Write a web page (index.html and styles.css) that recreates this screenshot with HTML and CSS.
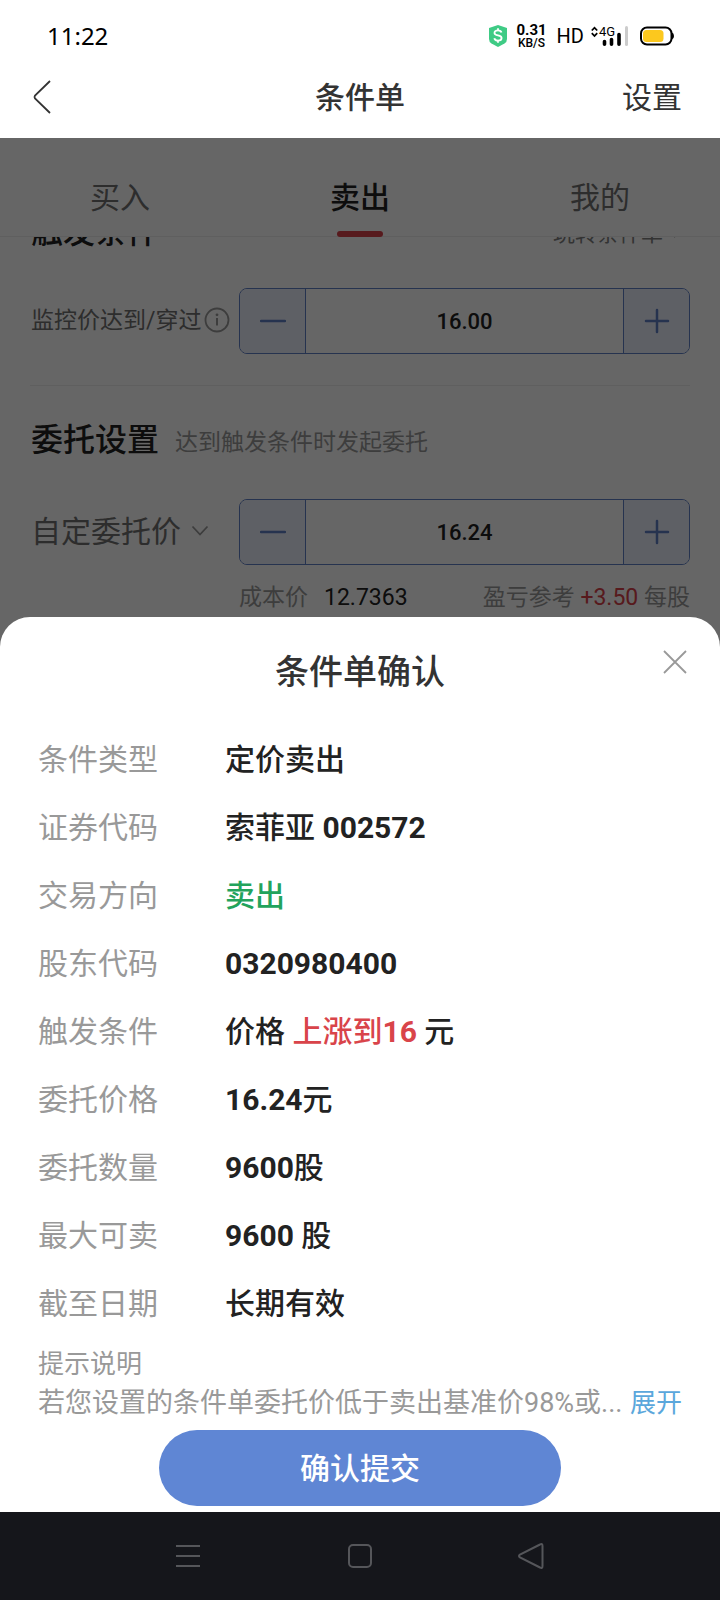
FILE: index.html
```html
<!DOCTYPE html>
<html lang="zh-CN">
<head>
<meta charset="utf-8">
<meta name="viewport" content="width=device-width, initial-scale=1">
<title>条件单</title>
<link rel="stylesheet" href="styles.css">
</head>
<body>
<div class="app">
  <div class="status">
    <span class="status-time">11:22</span>
    <div class="status-icons">
      <svg class="shield" width="20" height="24" viewBox="0 0 20 24" aria-hidden="true">
        <path d="M10 1L19 4V15Q19 18 16.500 19.500L10 23L3.500 19.500Q1 18 1 15V4Z" fill="#3fcb85"/>
        <path d="M13.500 8.500C13 6.800 11.700 6.300 10 6.300C8 6.300 6.500 7.200 6.500 8.900C6.500 12.400 13.600 10.400 13.600 14C13.600 15.700 12 16.600 10 16.600C8 16.600 6.700 15.900 6.300 14.200M10 4.300V6.300M10 16.600V18.800" fill="none" stroke="#fff" stroke-width="1.800"/>
      </svg>
      <span class="speed"><span class="speed-value">0.31</span><span class="speed-unit">KB/S</span></span>
      <span class="hd">HD</span>
      <svg class="signal" width="38" height="24" viewBox="0 0 38 24" role="img" aria-label="4G">
        <path d="M0.800 6.500L3.500 3.700L6.200 6.500M0.800 9.200L3.500 12L6.200 9.200" fill="none" stroke="#000" stroke-width="1.800"/>
        <text x="8" y="12" class="signal-text">4G</text>
        <path d="M13.500 17.500V20.300M20.500 15.500V20.300M28 10.500V20.300" stroke="#000" stroke-width="3.600" stroke-linecap="round"/>
        <path d="M35.500 3.500V20.500" stroke="#ccc" stroke-width="3" stroke-linecap="round"/>
      </svg>
      <svg class="battery" width="35" height="20" viewBox="0 0 35 20" aria-hidden="true">
        <rect x="1" y="1.500" width="30.500" height="17" rx="6" fill="#fff" stroke="#000" stroke-width="2"/>
        <path d="M32 6.500Q34 7 34 10T32 13.500Z" fill="#000"/>
        <rect x="3" y="4" width="20.500" height="12" rx="3.500" fill="#fcc81e"/>
      </svg>
    </div>
  </div>

  <header class="header">
    <button class="back" type="button" aria-label="返回">
      <svg width="20" height="36" viewBox="0 0 20 36" aria-hidden="true"><path d="M18 1L3 15.500Q2 17 3 18.500L18 33" fill="none" stroke="#333" stroke-width="1.800"/></svg>
    </button>
    <h1 class="header-title">条件单</h1>
    <button class="settings" type="button">设置</button>
  </header>

  <main class="stage">
    <div class="page">
      <nav class="tabs">
        <button class="tab" type="button">买入</button>
        <button class="tab tab-active" type="button">卖出</button>
        <button class="tab" type="button">我的</button>
      </nav>
      <div class="scroller">
        <form class="form">
          <section class="group">
            <div class="group-head">
              <h2 class="group-title">触发条件</h2>
              <a class="guide" href="#guide">玩转条件单
                <svg width="8" height="14" viewBox="0 0 8 14" aria-hidden="true"><path d="M1 1L7 7L1 13" fill="none" stroke="#999" stroke-width="1.800"/></svg>
              </a>
            </div>
            <div class="field">
              <div class="field-label">
                <label class="label-small" for="watch">监控价达到/穿过</label>
                <svg width="26" height="26" viewBox="0 0 26 26" aria-hidden="true"><circle cx="13" cy="13" r="11.500" fill="none" stroke="#999" stroke-width="1.800"/><circle cx="13" cy="7.800" r="1.400" fill="#999"/><path d="M13 11V18.500" stroke="#999" stroke-width="2"/></svg>
              </div>
              <div class="stepper">
                <button class="step" type="button" aria-label="减少"><svg width="26" height="26" viewBox="0 0 26 26" aria-hidden="true"><path d="M1 13H25" class="step-line"/></svg></button>
                <input class="step-value" id="watch" type="text" value="16.00">
                <button class="step" type="button" aria-label="增加"><svg width="26" height="26" viewBox="0 0 26 26" aria-hidden="true"><path d="M2 13H24M13 2V24" class="step-line"/></svg></button>
              </div>
            </div>
          </section>
          <section class="group group-order">
            <div class="group-head">
              <h2 class="group-title">委托设置</h2>
              <p class="group-note">达到触发条件时发起委托</p>
            </div>
            <div class="field">
              <div class="field-label">
                <label class="label-large" for="price">自定委托价</label>
                <svg width="18" height="12" viewBox="0 0 18 12" aria-hidden="true"><path d="M1.500 1.500L9 9.500L16.500 1.500" fill="none" stroke="#999" stroke-width="1.800"/></svg>
              </div>
              <div class="stepper">
                <button class="step" type="button" aria-label="减少"><svg width="26" height="26" viewBox="0 0 26 26" aria-hidden="true"><path d="M1 13H25" class="step-line"/></svg></button>
                <input class="step-value" id="price" type="text" value="16.24">
                <button class="step" type="button" aria-label="增加"><svg width="26" height="26" viewBox="0 0 26 26" aria-hidden="true"><path d="M2 13H24M13 2V24" class="step-line"/></svg></button>
              </div>
            </div>
            <div class="cost">
              <span class="cost-item">成本价<span class="cost-value">12.7363</span></span>
              <span>盈亏参考 <span class="cost-gain">+3.50</span> 每股</span>
            </div>
          </section>
        </form>
      </div>
    </div>
    <div class="backdrop"></div>
    <section class="sheet" role="dialog" aria-labelledby="sheet-title">
      <button class="close" type="button" aria-label="关闭">
        <svg width="24" height="24" viewBox="0 0 24 24" aria-hidden="true"><path d="M1 1L23 23M23 1L1 23" stroke="#999" stroke-width="1.800"/></svg>
      </button>
      <h2 class="sheet-title" id="sheet-title">条件单确认</h2>
      <dl class="details">
        <dt>条件类型</dt><dd>定价卖出</dd>
        <dt>证券代码</dt><dd>索菲亚 <b>002572</b></dd>
        <dt>交易方向</dt><dd class="sell">卖出</dd>
        <dt>股东代码</dt><dd><b>0320980400</b></dd>
        <dt>触发条件</dt><dd>价格 <span class="rise">上涨到<b>16</b></span> 元</dd>
        <dt>委托价格</dt><dd><b>16.24</b>元</dd>
        <dt>委托数量</dt><dd><b>9600</b>股</dd>
        <dt>最大可卖</dt><dd><b>9600</b> 股</dd>
        <dt>截至日期</dt><dd>长期有效</dd>
      </dl>
      <div class="tips">
        <p class="tips-title">提示说明</p>
        <div class="tips-row">
          <p class="tips-text">若您设置的条件单委托价低于卖出基准价98%或...</p>
          <a class="expand" href="#tips">展开</a>
        </div>
      </div>
      <button class="submit" type="button">确认提交</button>
    </section>
  </main>

  <nav class="system-nav">
    <button class="system-button" type="button" aria-label="菜单"><svg width="28" height="28" viewBox="0 0 28 28" aria-hidden="true"><path d="M2 4H26M2 14H26M2 24H26" class="system-line"/></svg></button>
    <button class="system-button" type="button" aria-label="主页"><svg width="28" height="28" viewBox="0 0 28 28" aria-hidden="true"><rect x="3" y="3" width="22" height="22" rx="4" class="system-line"/></svg></button>
    <button class="system-button" type="button" aria-label="后退"><svg width="28" height="28" viewBox="0 0 28 28" aria-hidden="true"><path d="M22 2.500Q24.500 1 24.500 4V24Q24.500 27 22 25.500L2 15.500Q0 14 2 12.500Z" class="system-line"/></svg></button>
  </nav>
</div>
</body>
</html>
```
FILE: styles.css
```css
* { box-sizing: border-box; }

body {
  margin: 0;
  background: #fff;
  color: #222;
  font-family: Roboto, "Noto Sans CJK SC", sans-serif;
}

h1, h2, p, dl, dd { margin: 0; }
h1, h2 { font-weight: 500; }
a { text-decoration: none; }
svg { display: block; flex: none; }

button {
  padding: 0;
  border: 0;
  background: none;
  color: inherit;
  font: inherit;
}

.app {
  display: flex;
  flex-direction: column;
  min-height: 100vh;
}

/* Status bar */
.status {
  display: flex;
  align-items: center;
  justify-content: space-between;
  height: 72px;
  padding: 0 45px 0 47px;
  color: #000;
}

.status-time { font: 24px/32px "Noto Sans", sans-serif; }
.status-icons { display: flex; align-items: center; }

.speed {
  display: flex;
  flex-direction: column;
  align-items: center;
  margin-left: 8px;
  font-weight: 700;
}

.speed-value { font-size: 15px; line-height: 14px; }
.speed-unit { font-size: 12px; font-weight: 500; line-height: 12px; }
.hd { margin-left: 10px; font-size: 20px; }
.signal { margin-left: 7px; }
.signal-text { font-size: 13px; }
.battery { margin-left: 11px; }

/* Title bar */
.header {
  display: grid;
  grid-template-columns: 1fr auto 1fr;
  align-items: center;
  height: 66px;
  padding: 0 32px 14px;
  color: #333;
  font-size: 30px;
  line-height: 44px;
}

.header-title { font-size: 30px; }
.back { justify-self: start; }
.settings { justify-self: end; padding-right: 6px; }

/* Page, backdrop and sheet share one grid cell */
.stage {
  display: grid;
  flex: 1;
  grid-template-columns: minmax(0, 1fr);
}

.page, .backdrop, .sheet { grid-area: 1 / 1; }
.backdrop { background: rgba(0, 0, 0, 0.6); }

.tabs {
  display: grid;
  grid-template-columns: repeat(3, 1fr);
  box-shadow: inset 0 -1px #eee;
}

.tab {
  display: flex;
  flex-direction: column;
  align-items: center;
  gap: 11px;
  padding-top: 38px;
  color: #707070;
  font-size: 30px;
  line-height: 44px;
}

.tab::after {
  width: 46px;
  height: 6px;
  border-radius: 3px;
  content: "";
}

.tab-active { color: #222; font-weight: 500; }
.tab-active::after { background: #d9414a; }

/* Form, scrolled a little under the tabs */
.scroller { overflow: hidden; }
.form { margin-top: -27px; padding: 0 30px; }
.group { padding-bottom: 31px; border-bottom: 1px solid #eee; }
.group-order { padding-top: 32px; border: 0; }

.group-head {
  display: flex;
  align-items: center;
  gap: 16px;
  margin-bottom: 34px;
}

.group-order .group-head { margin-bottom: 37px; }
.group-title { padding-left: 1px; font-size: 32px; line-height: 44px; }
.group-note { color: #999; font-size: 23px; }

.guide {
  display: flex;
  align-items: center;
  gap: 10px;
  margin-left: auto;
  padding: 0 9px 3px 0;
  color: #808080;
  font-size: 22px;
}

.field { display: flex; align-items: center; }

.field-label {
  display: flex;
  flex: none;
  align-items: center;
  gap: 2px;
  width: 209px;
  padding: 0 0 2px 1px;
  color: #707070;
}

.label-small, .label-large { padding-bottom: 4px; white-space: nowrap; }
.label-small { font-size: 23px; }
.label-large { margin-right: 8px; font-size: 30px; }

.stepper {
  display: flex;
  flex: 1;
  min-width: 0;
  height: 66px;
  overflow: hidden;
  border: 1px solid #5f80c6;
  border-radius: 8px;
}

.step {
  display: flex;
  flex: none;
  align-items: center;
  justify-content: center;
  width: 65px;
  background: #ebeffc;
}

.step-line { stroke: #5f80c6; stroke-width: 2.500; stroke-linecap: round; }

.step-value {
  flex: 1;
  min-width: 0;
  padding: 0;
  border: solid #5f80c6;
  border-width: 0 1px;
  background: none;
  color: #222;
  font: 500 22px Roboto, sans-serif;
  text-align: center;
}

.cost {
  display: flex;
  justify-content: space-between;
  margin-top: 17px;
  padding-left: 209px;
  color: #999;
  font-size: 23px;
  line-height: 32px;
}

.cost-value { margin-left: 16px; color: #222; }
.cost-gain { color: #d9414a; }

/* Confirmation sheet */
.sheet {
  position: relative;
  align-self: end;
  display: flex;
  flex-direction: column;
  padding: 30px 38px 6px;
  border-radius: 30px 30px 0 0;
  background: #fff;
}

.close { position: absolute; top: 33px; right: 33px; }

.sheet-title {
  color: #333;
  font-size: 34px;
  line-height: 50px;
  text-align: center;
}

.details {
  display: grid;
  grid-template-columns: 187px 1fr;
  margin-top: 29px;
  font-size: 30px;
  line-height: 68px;
}

.details dt { color: #999; }
.details dd { font-weight: 500; }
.details b { font-weight: 700; }
.details .sell { color: #22a35c; }
.rise { color: #d9444a; }

.tips {
  margin-top: 7px;
  color: #999;
  font-size: 27px;
  line-height: 39px;
}

.tips-title { font-size: 26px; }
.tips-row { display: flex; justify-content: space-between; }

.tips-text {
  min-width: 0;
  overflow: hidden;
  white-space: nowrap;
}

.expand { flex: none; color: #5ba7dc; font-size: 26px; }

.submit {
  align-self: center;
  width: 402px;
  max-width: 100%;
  height: 76px;
  margin-top: 7px;
  padding-bottom: 5px;
  border-radius: 38px;
  background: #5f86d4;
  color: #fff;
  font-size: 30px;
  font-weight: 500;
}

/* System navigation */
.system-nav {
  display: flex;
  align-items: center;
  justify-content: center;
  gap: 144px;
  height: 88px;
  background: #15161b;
}

.system-line { fill: none; stroke: #55565a; stroke-width: 2; }
```
